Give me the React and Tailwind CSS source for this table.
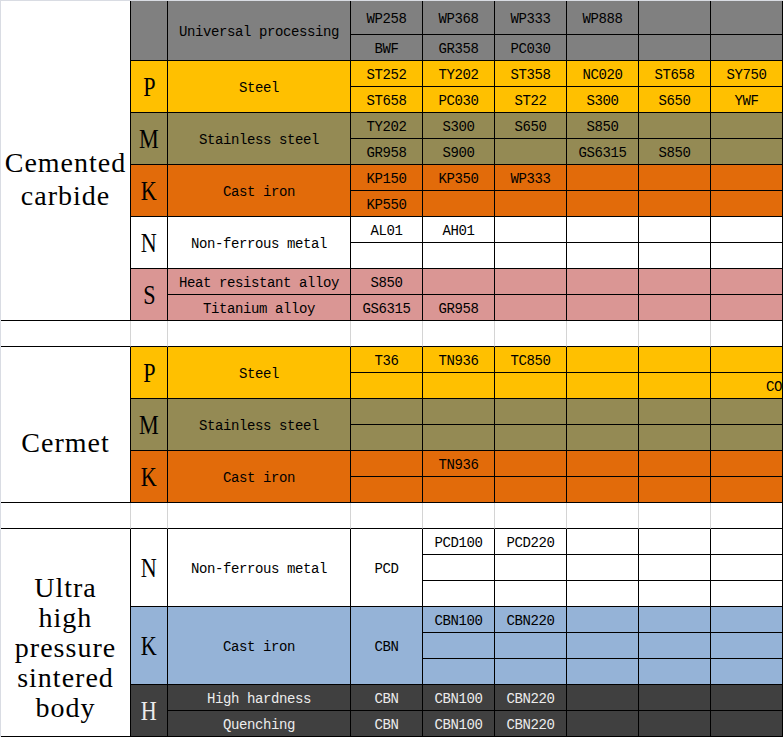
const mono = "font-['Liberation_Mono','Courier_New',monospace]";

const cemented = [
  {
    letter: "",
    bg: "bg-[#808080]",
    text: "text-black",
    first: true,
    mat: "Universal processing",
    rows: [
      ["WP258", "WP368", "WP333", "WP888", "", ""],
      ["BWF", "GR358", "PC030", "", "", ""],
    ],
  },
  {
    letter: "P",
    bg: "bg-[#ffc000]",
    text: "text-black",
    mat: "Steel",
    rows: [
      ["ST252", "TY202", "ST358", "NC020", "ST658", "SY750"],
      ["ST658", "PC030", "ST22", "S300", "S650", "YWF"],
    ],
  },
  {
    letter: "M",
    bg: "bg-[#948a54]",
    text: "text-black",
    mat: "Stainless steel",
    rows: [
      ["TY202", "S300", "S650", "S850", "", ""],
      ["GR958", "S900", "", "GS6315", "S850", ""],
    ],
  },
  {
    letter: "K",
    bg: "bg-[#e26b0a]",
    text: "text-black",
    mat: "Cast iron",
    rows: [
      ["KP150", "KP350", "WP333", "", "", ""],
      ["KP550", "", "", "", "", ""],
    ],
  },
  {
    letter: "N",
    bg: "bg-white",
    text: "text-black",
    mat: "Non-ferrous metal",
    rows: [
      ["AL01", "AH01", "", "", "", ""],
      ["", "", "", "", "", ""],
    ],
  },
  {
    letter: "S",
    bg: "bg-[#da9694]",
    text: "text-black",
    mat: ["Heat resistant alloy", "Titanium alloy"],
    rows: [
      ["S850", "", "", "", "", ""],
      ["GS6315", "GR958", "", "", "", ""],
    ],
  },
];

const cermet = [
  {
    letter: "P",
    bg: "bg-[#ffc000]",
    text: "text-black",
    mat: "Steel",
    rows: [
      ["T36", "TN936", "TC850", "", "", ""],
      ["", "", "", "", "", "CO"],
    ],
  },
  {
    letter: "M",
    bg: "bg-[#948a54]",
    text: "text-black",
    mat: "Stainless steel",
    rows: [
      ["", "", "", "", "", ""],
      ["", "", "", "", "", ""],
    ],
  },
  {
    letter: "K",
    bg: "bg-[#e26b0a]",
    text: "text-black",
    mat: "Cast iron",
    rows: [
      ["", "TN936", "", "", "", ""],
      ["", "", "", "", "", ""],
    ],
  },
];

const sintered = [
  {
    letter: "N",
    bg: "bg-white",
    text: "text-black",
    mat: "Non-ferrous metal",
    span: "PCD",
    rows: [
      ["PCD100", "PCD220", "", "", ""],
      ["", "", "", "", ""],
      ["", "", "", "", ""],
    ],
  },
  {
    letter: "K",
    bg: "bg-[#95b3d7]",
    text: "text-black",
    mat: "Cast iron",
    span: "CBN",
    rows: [
      ["CBN100", "CBN220", "", "", ""],
      ["", "", "", "", ""],
      ["", "", "", "", ""],
    ],
  },
  {
    letter: "H",
    bg: "bg-[#404040]",
    text: "text-[#ececec]",
    mat: ["High hardness", "Quenching"],
    rows: [
      ["CBN", "CBN100", "CBN220", "", "", ""],
      ["CBN", "CBN100", "CBN220", "", "", ""],
    ],
  },
];

function Cell({ children, className = "" }) {
  return (
    <div
      className={`shrink-0 border-r border-b border-black flex items-center justify-center overflow-hidden whitespace-nowrap pt-[2px] ${className}`}
    >
      {children}
    </div>
  );
}

function Group({ g }) {
  return (
    <div className={`flex ${g.bg} ${g.text}`}>
      <Cell className="w-[37px]">
        <span className="font-['Liberation_Serif','Times_New_Roman',serif] text-[27px] leading-none scale-x-[0.82]">
          {g.letter}
        </span>
      </Cell>
      {Array.isArray(g.mat) ? (
        <div className="flex flex-col w-[183px] shrink-0">
          {g.mat.map((m) => (
            <Cell key={m} className="h-[26px] w-[183px]">
              {m}
            </Cell>
          ))}
        </div>
      ) : (
        <Cell className="w-[183px]">{g.mat}</Cell>
      )}
      {g.span && <Cell className="w-[72px]">{g.span}</Cell>}
      <div className="flex flex-col">
        {g.rows.map((row, i) => (
          <div key={i} className={`flex ${g.first && i === 0 ? "h-[34px]" : "h-[26px]"}`}>
            {row.map((v, j) =>
              v === "CO" ? (
                <Cell key={j} className="w-[72px] justify-start pl-[55px]">
                  {v}
                </Cell>
              ) : (
                <Cell key={j} className="w-[72px]">
                  {v}
                </Cell>
              )
            )}
          </div>
        ))}
      </div>
    </div>
  );
}

// label block: serif, nudged down like the sheet's merged cells
function Section({ label, groups, lead, pad }) {
  return (
    <div className="flex">
      <div
        className={`w-[130px] shrink-0 border-r border-b border-black bg-white flex items-center justify-center ${pad}`}
      >
        <div
          className={`font-['Liberation_Serif','Times_New_Roman',serif] text-[28px] tracking-[1px] text-center text-black ${lead}`}
        >
          {label.map((l) => (
            <div key={l}>{l}</div>
          ))}
        </div>
      </div>
      <div className="flex flex-col">
        {groups.map((g, i) => (
          <Group key={i} g={g} />
        ))}
      </div>
    </div>
  );
}

function Spacer() {
  return (
    <div className="flex h-[26px] bg-white">
      <div className="w-[130px] shrink-0 border-r border-b border-r-[#d4d4d4] border-b-black" />
      <div className="w-[37px] shrink-0 border-r border-b border-r-[#d4d4d4] border-b-black" />
      <div className="w-[183px] shrink-0 border-r border-b border-r-[#d4d4d4] border-b-black" />
      <div className="w-[72px] shrink-0 border-r border-b border-r-[#d4d4d4] border-b-black" />
      <div className="w-[72px] shrink-0 border-r border-b border-r-[#d4d4d4] border-b-black" />
      <div className="w-[72px] shrink-0 border-r border-b border-r-[#d4d4d4] border-b-black" />
      <div className="w-[72px] shrink-0 border-r border-b border-r-[#d4d4d4] border-b-black" />
      <div className="w-[72px] shrink-0 border-r border-b border-r-[#d4d4d4] border-b-black" />
      <div className="w-[72px] shrink-0 border-r border-b border-black" />
    </div>
  );
}

export default function App() {
  return (
    <div
      className={`w-[783px] h-[737px] overflow-hidden bg-white border-t border-l border-[#d9dce3] ${mono} text-[14px] tracking-[-0.4px] leading-none text-black`}
    >
      <Section label={["Cemented", "carbide"]} groups={cemented} lead="leading-[33px]" pad="pt-[36px]" />
      <Spacer />
      <Section label={["Cermet"]} groups={cermet} lead="leading-[33px]" pad="pt-[35px]" />
      <Spacer />
      <Section
        label={["Ultra", "high", "pressure", "sintered", "body"]}
        groups={sintered}
        lead="leading-[30px]"
        pad="pt-[31px]"
      />
    </div>
  );
}
